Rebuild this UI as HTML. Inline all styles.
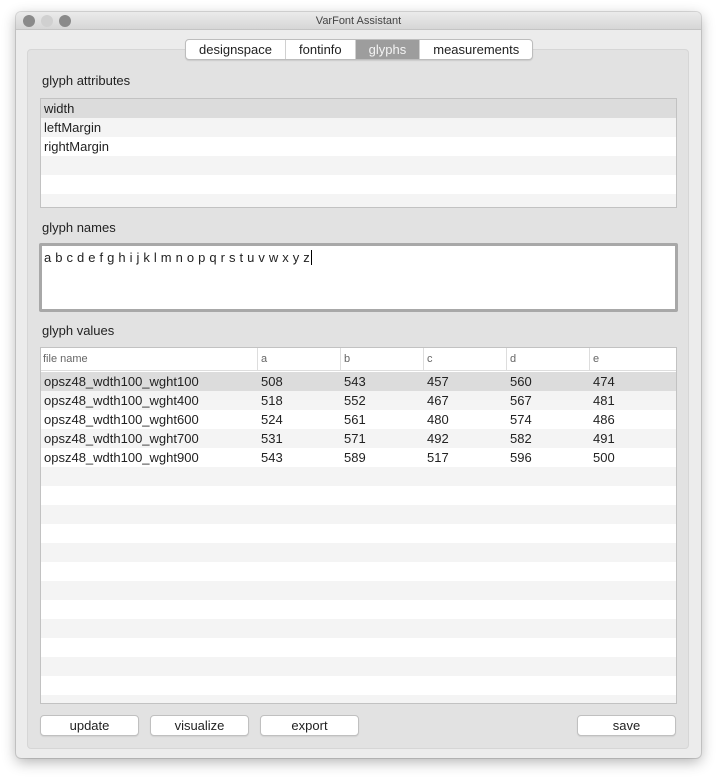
<!DOCTYPE html>
<html><head><meta charset="utf-8"><style>
*{box-sizing:border-box;margin:0;padding:0}
body{width:717px;height:780px;background:#fff;font-family:"Liberation Sans",sans-serif;font-size:13px;color:#222;position:relative;overflow:hidden}
.win{position:absolute;left:16px;top:12px;width:685px;height:746px;background:#ececec;border-radius:5px;box-shadow:0 4px 14px rgba(0,0,0,.3),0 0 0 1px rgba(0,0,0,.12)}
.title{position:absolute;left:0;top:0;width:100%;height:18px;background:linear-gradient(#ebebeb,#d6d6d6);border-bottom:1px solid #c4c4c4;border-radius:5px 5px 0 0;text-align:center;font-size:11px;line-height:18px;color:#444}
.dot{position:absolute;top:3px;width:12px;height:12px;border-radius:50%;background:#8a8a8a}
.panel{position:absolute;left:11px;top:37px;width:662px;height:700px;background:#e2e2e2;border:1px solid #d6d6d6;border-radius:4px}
.abs{position:absolute}
.tabs{position:absolute;left:185px;top:39px;height:21px;display:flex;border:1px solid #bdbdbd;border-radius:4px;background:#fff;overflow:hidden;box-shadow:0 1px 1px rgba(0,0,0,.1)}
.tabs div{padding:0 13px;line-height:19px;font-size:13px;border-right:1px solid #d0d0d0}
.tabs div:last-child{border-right:0}
.tabs .sel{background:#9d9d9d;color:#f4f4f4}
.lbl{position:absolute;left:42px;font-size:13px;color:#222}
.tbl{position:absolute;left:40px;width:637px;border:1px solid #c2c2c2;background:#fff;overflow:hidden}
.row{height:19px;line-height:19px;padding-left:3px;position:relative}
.row:nth-child(even){background:#f4f4f4}
.row.s{background:#dcdcdc!important}
.c{position:absolute;top:0}
.btn{position:absolute;top:715px;height:21px;width:99px;background:#fff;border:1px solid #c0c0c0;border-radius:4px;text-align:center;line-height:19px;font-size:13px;box-shadow:0 1px 1px rgba(0,0,0,.08)}
</style></head><body>
<div class="win">
<div class="title">VarFont Assistant
<div class="dot" style="left:7px"></div><div class="dot" style="left:25px;background:#d0d0d0"></div><div class="dot" style="left:43px"></div></div>
<div class="panel"></div>
</div>
<div class="tabs"><div>designspace</div><div>fontinfo</div><div class="sel">glyphs</div><div>measurements</div></div>
<div class="lbl" style="top:73px">glyph attributes</div>
<div class="tbl" style="top:98px;height:110px">
<div class="row s">width</div><div class="row">leftMargin</div><div class="row">rightMargin</div><div class="row"></div><div class="row"></div><div class="row"></div>
</div>
<div class="lbl" style="top:220px">glyph names</div>
<div class="abs" style="left:39px;top:243px;width:639px;height:69px;background:#fff;border:3px solid #a8a8a8;border-radius:2px;padding:4px 2px;font-size:13px;letter-spacing:0.2px">a b c d e f g h i j k l m n o p q r s t u v w x y z<span style="border-left:1px solid #000;margin-left:1px"></span></div>
<div class="lbl" style="top:323px">glyph values</div>
<div class="tbl" style="top:347px;height:357px">
<div style="height:23px;line-height:23px;font-size:11px;color:#666;border-bottom:1px solid #ddd;position:relative;background:#fff">
<span class="c" style="left:2px">file name</span>
<span class="c" style="left:216px;border-left:1px solid #ddd;padding-left:3px">a</span>
<span class="c" style="left:299px;border-left:1px solid #ddd;padding-left:3px">b</span>
<span class="c" style="left:382px;border-left:1px solid #ddd;padding-left:3px">c</span>
<span class="c" style="left:465px;border-left:1px solid #ddd;padding-left:3px">d</span>
<span class="c" style="left:548px;border-left:1px solid #ddd;padding-left:3px">e</span>
<span class="c" style="left:631px;border-left:1px solid #ddd;padding-left:3px"></span>
</div>
<div style="padding-top:1px">
<div class="row s">opsz48_wdth100_wght100<span class="c" style="left:220px">508</span><span class="c" style="left:303px">543</span><span class="c" style="left:386px">457</span><span class="c" style="left:469px">560</span><span class="c" style="left:552px">474</span></div>
<div class="row">opsz48_wdth100_wght400<span class="c" style="left:220px">518</span><span class="c" style="left:303px">552</span><span class="c" style="left:386px">467</span><span class="c" style="left:469px">567</span><span class="c" style="left:552px">481</span></div>
<div class="row">opsz48_wdth100_wght600<span class="c" style="left:220px">524</span><span class="c" style="left:303px">561</span><span class="c" style="left:386px">480</span><span class="c" style="left:469px">574</span><span class="c" style="left:552px">486</span></div>
<div class="row">opsz48_wdth100_wght700<span class="c" style="left:220px">531</span><span class="c" style="left:303px">571</span><span class="c" style="left:386px">492</span><span class="c" style="left:469px">582</span><span class="c" style="left:552px">491</span></div>
<div class="row">opsz48_wdth100_wght900<span class="c" style="left:220px">543</span><span class="c" style="left:303px">589</span><span class="c" style="left:386px">517</span><span class="c" style="left:469px">596</span><span class="c" style="left:552px">500</span></div>
<div class="row"></div><div class="row"></div><div class="row"></div><div class="row"></div><div class="row"></div><div class="row"></div><div class="row"></div><div class="row"></div><div class="row"></div><div class="row"></div><div class="row"></div><div class="row"></div><div class="row"></div>
</div>
</div>
<div class="btn" style="left:40px">update</div>
<div class="btn" style="left:150px">visualize</div>
<div class="btn" style="left:260px">export</div>
<div class="btn" style="left:577px">save</div>
</body></html>
